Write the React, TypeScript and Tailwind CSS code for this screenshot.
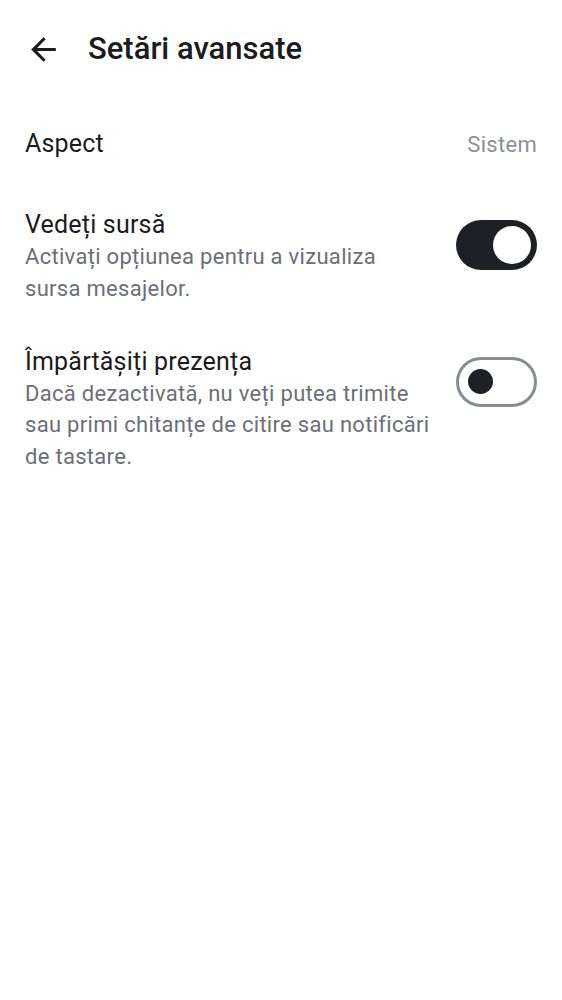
function Toggle({ on }: { on: boolean }) {
  if (on) {
    return (
      <div className="mt-[12px] w-[81px] h-[50px] rounded-full bg-[#1f2025] flex items-center justify-end pr-[6px] shrink-0">
        <div className="w-[38px] h-[38px] rounded-full bg-white" />
      </div>
    )
  }
  return (
    <div className="mt-[12px] w-[81px] h-[50px] rounded-full border-[3px] border-[#878c96] bg-white flex items-center pl-[9px] shrink-0">
      <div className="w-[25px] h-[25px] rounded-full bg-[#1f2025]" />
    </div>
  )
}

function SettingRow({ title, desc, on }: { title: string; desc: string; on: boolean }) {
  return (
    <div className="flex items-start justify-between px-[25px]">
      <div className="w-[409px]">
        <div className="text-[25px] leading-[33px] tracking-[0.2px] text-[#1b1c20]">{title}</div>
        <div className="text-[22px] leading-[31.75px] tracking-[0.3px] text-[#6b6f77]">{desc}</div>
      </div>
      <Toggle on={on} />
    </div>
  )
}

export default function App() {
  return (
    <div className="min-h-screen bg-white font-['Roboto',sans-serif]">
      <div className="flex items-center h-[99px] pl-[25px]">
        <svg viewBox="0 0 24 24" className="w-[37px] h-[37px] text-[#1b1c20]" fill="currentColor">
          <path d="M20 11H7.83l5.59-5.59L12 4l-8 8 8 8 1.41-1.41L7.83 13H20v-2z" />
        </svg>
        <h1 className="ml-[26px] text-[31px] font-medium text-[#1b1c20]">Setări avansate</h1>
      </div>
      <div className="flex items-center justify-between h-[90px] px-[25px]">
        <span className="text-[25px] tracking-[0.2px] text-[#1b1c20]">Aspect</span>
        <span className="text-[22px] tracking-[0.3px] text-[#8b9099]">Sistem</span>
      </div>
      <div className="pt-[19px]">
        <SettingRow
          on
          title="Vedeți sursă"
          desc="Activați opțiunea pentru a vizualiza sursa mesajelor."
        />
      </div>
      <div className="pt-[40px]">
        <SettingRow
          on={false}
          title="Împărtășiți prezența"
          desc="Dacă dezactivată, nu veți putea trimite sau primi chitanțe de citire sau notificări de tastare."
        />
      </div>
    </div>
  )
}
